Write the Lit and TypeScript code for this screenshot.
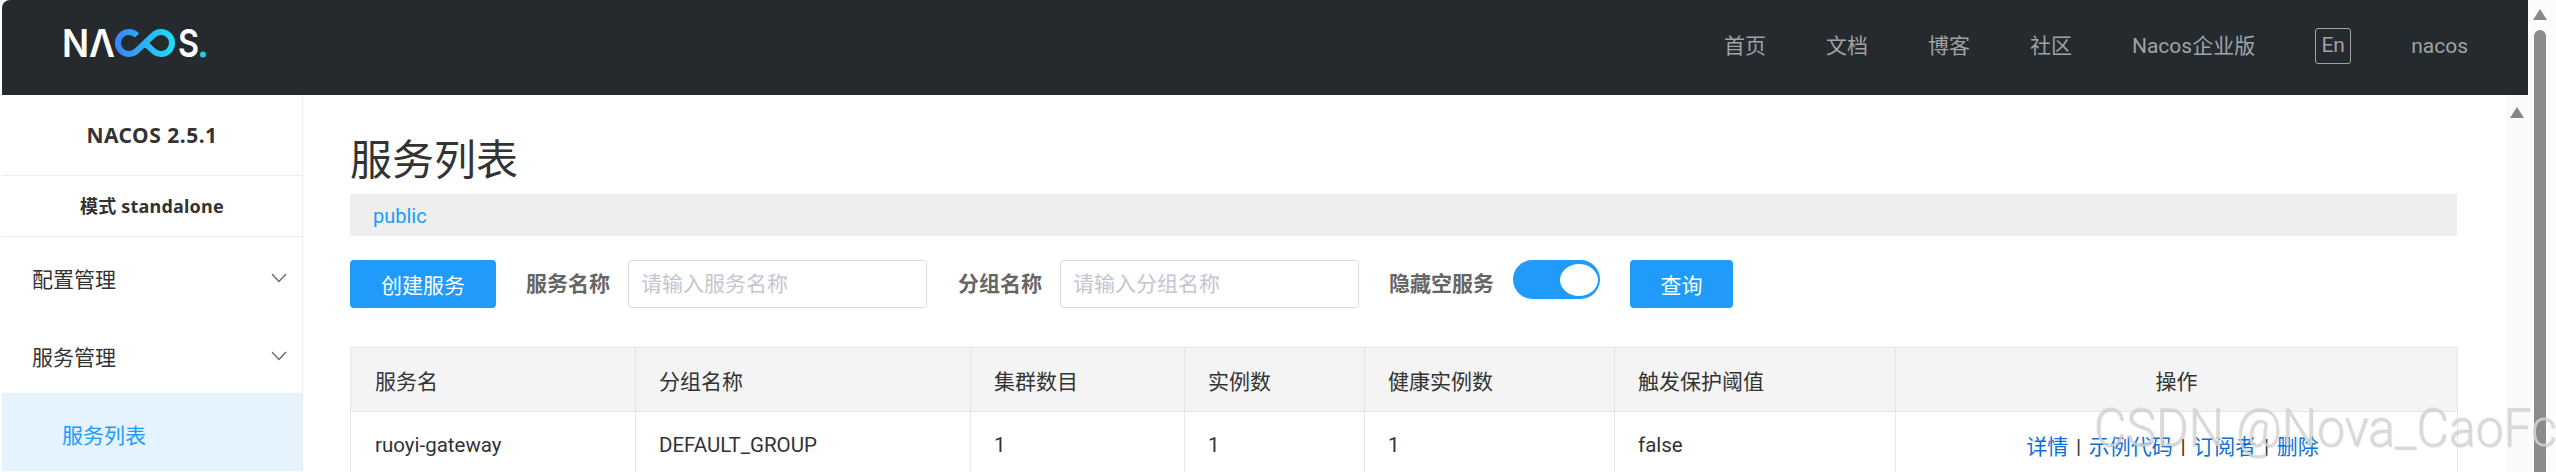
import { LitElement, html, css, svg } from "lit";
import { customElement } from "lit/decorators.js";

const headers = ["服务名", "分组名称", "集群数目", "实例数", "健康实例数", "触发保护阈值", "操作"];
const cells = ["ruoyi-gateway", "DEFAULT_GROUP", "1", "1", "1", "false"];
const widths = [285, 335, 214, 180, 250, 281, 562];
const navs = ["首页", "文档", "博客", "社区", "Nacos企业版"];

const chevron = svg`<svg class="chev" width="16" height="10" viewBox="0 0 16 10"><path d="M1 1l7 7.5L15 1" fill="none" stroke="#666" stroke-width="1.3"/></svg>`;

@customElement("app-root")
export class AppRoot extends LitElement {
  static styles = css`
    :host {
      display: flex;
      height: 472px;
      overflow: hidden;
      position: relative;
      background: #fff;
      padding-left: 2px;
      box-sizing: border-box;
      font-family: Roboto, "Noto Sans CJK SC", sans-serif;
      font-size: 21px;
      color: #333;
    }
    .main { flex: 1; min-width: 0; display: flex; flex-direction: column; }
    .outer-bar {
      width: 28px; flex: none; background: #fcfcfc;
      display: flex; flex-direction: column; align-items: center; padding-right: 4px; box-sizing: border-box;
    }
    .arrow {
      width: 0; height: 0; border-left: 7px solid transparent; border-right: 7px solid transparent;
      border-bottom: 11px solid #888; flex: none;
    }
    .outer-bar .arrow { margin-top: 9px; }
    .thumb { width: 12px; flex: 1; margin-top: 10px; background: #8b8b8b; border-radius: 6px 6px 0 0; }

    header {
      height: 95px; flex: none; background: #252a2f; border-top-left-radius: 8px;
      display: flex; align-items: center; padding: 0 60px; box-sizing: border-box;
    }
    .logo { display: block; margin-top: -9px; }
    .nav { margin-left: auto; display: flex; align-items: center; gap: 60px; color: #a0a2a4; line-height: 28px; margin-top: -3px; }
    .en { border: 1px solid #a0a2a4; border-radius: 3px; width: 36px; height: 36px; box-sizing: border-box; text-align: center; line-height: 32px; }

    .body { flex: 1; min-height: 0; display: flex; }
    aside { width: 300px; flex: none; border-right: 1px solid #eee; box-sizing: content-box; }
    .ver, .mode { font-family: "Noto Sans", "Noto Sans CJK SC", sans-serif; font-weight: 700; text-align: center; border-bottom: 1px solid #eee; box-sizing: border-box; }
    .ver { height: 81px; line-height: 80px; letter-spacing: 0.5px; }
    .mode { height: 61px; line-height: 61px; font-size: 18px; letter-spacing: 0.2px; }
    .item { height: 78px; display: flex; align-items: center; justify-content: space-between; padding: 4px 15px 0 30px; box-sizing: border-box; }
    .sub { height: 78px; background: #e4f3fe; color: #209bfa; display: flex; align-items: center; padding-left: 60px; padding-top: 3px; box-sizing: border-box; }

    .content { flex: 1; min-width: 0; padding: 0 49px 0 47px; }
    h1 { margin: 0; font-size: 42px; font-weight: 400; height: 99px; line-height: 42px; padding-top: 45px; box-sizing: border-box; }
    .crumb { height: 42px; background: #eee; color: #209bfa; font-size: 20px; line-height: 44px; padding-left: 23px; }

    .toolbar { display: flex; align-items: flex-start; margin-top: 24px; height: 87px; }
    .btn { height: 48px; background: #209bfa; color: #fff; border-radius: 4px; display: flex; align-items: center; justify-content: center; flex: none; }
    .btn.create { width: 146px; }
    .btn.query { width: 103px; margin-left: 30px; }
    .label { font-weight: 700; color: #666; line-height: 48px; flex: none; }
    .l1 { margin-left: 30px; margin-right: 18px; }
    .l2 { margin-left: 31px; margin-right: 18px; }
    .l3 { margin-left: 30px; margin-right: 19px; }
    .input { width: 299px; height: 48px; border: 1px solid #dcdee3; border-radius: 4px; box-sizing: border-box; color: #c4c6cf; line-height: 46px; padding-left: 12px; flex: none; }
    .switch { width: 87px; height: 39px; border-radius: 20px; background: #209bfa; position: relative; flex: none; }
    .knob { position: absolute; right: 2px; top: 4px; width: 38px; height: 32px; border-radius: 50%; background: #fff; }

    table { border-collapse: collapse; table-layout: fixed; width: 2107px; }
    th, td { border: 1px solid #e6e6e6; padding: 0 0 0 23px; text-align: left; font-weight: 400; box-sizing: border-box; }
    th:first-child, td:first-child { padding-left: 24px; }
    th { height: 64px; background: #f4f4f4; }
    td { height: 66px; font-size: 20.5px; }
    th:last-child, td:last-child { text-align: center; padding: 0; }
    .links { color: #0a6fd6; margin-left: -8px; font-size: 21px; }
    .links i { font-style: normal; margin: 0 2.5px; color: #333; }

    .inner-bar { width: 22px; flex: none; background: #fafafa; display: flex; flex-direction: column; align-items: center; }
    .inner-bar .arrow { margin-top: 12px; }

    .mark {
      position: absolute; right: 0; top: 398px; font-family: Roboto, sans-serif; font-weight: 300; font-size: 54px; line-height: 60px;
      color: rgba(216,216,216,.8); text-shadow: 1px 1px 1px rgba(140,140,140,.35); white-space: nowrap; pointer-events: none;
      transform: scaleX(0.923); transform-origin: right center;
    }
  `;

  logo() {
    return svg`<svg class="logo" width="146" height="52" viewBox="0 0 146 52">
      <defs><linearGradient id="g" x1="0" x2="1" y1="0" y2="0"><stop offset="0" stop-color="#3b86f8"/><stop offset="1" stop-color="#1cdcf8"/></linearGradient></defs>
      <text x="0" y="40" font-family="Inter, sans-serif" font-weight="600" font-size="38.5" fill="#fff" textLength="53" lengthAdjust="spacingAndGlyphs">NΛ</text>
      <path d="M75 7.5A11 11 0 1 0 75 22.5L91 7.5A11 11 0 1 1 91 22.5L83 15" transform="translate(0 11)" fill="none" stroke="url(#g)" stroke-width="6"/>
      <text x="116" y="40" font-family="Inter, sans-serif" font-weight="600" font-size="38.5" fill="#fff" textLength="21" lengthAdjust="spacingAndGlyphs">S</text>
      <circle cx="141" cy="37.5" r="3" fill="#1cd0e8"/>
    </svg>`;
  }

  render() {
    return html`
      <div class="main">
        <header>
          ${this.logo()}
          <div class="nav">
            ${navs.map((n) => html`<span>${n}</span>`)}
            <span class="en">En</span>
            <span>nacos</span>
          </div>
        </header>
        <div class="body">
          <aside>
            <div class="ver">NACOS 2.5.1</div>
            <div class="mode">模式 standalone</div>
            <div class="item"><span>配置管理</span>${chevron}</div>
            <div class="item"><span>服务管理</span>${chevron}</div>
            <div class="sub">服务列表</div>
          </aside>
          <div class="content">
            <h1>服务列表</h1>
            <div class="crumb">public</div>
            <div class="toolbar">
              <div class="btn create">创建服务</div>
              <span class="label l1">服务名称</span>
              <div class="input">请输入服务名称</div>
              <span class="label l2">分组名称</span>
              <div class="input">请输入分组名称</div>
              <span class="label l3">隐藏空服务</span>
              <div class="switch"><div class="knob"></div></div>
              <div class="btn query">查询</div>
            </div>
            <table>
              <colgroup>${widths.map((w) => html`<col style="width:${w}px" />`)}</colgroup>
              <thead><tr>${headers.map((h) => html`<th>${h}</th>`)}</tr></thead>
              <tbody>
                <tr>
                  ${cells.map((c) => html`<td>${c}</td>`)}
                  <td><span class="links">详情<i> | </i>示例代码<i> | </i>订阅者<i> | </i>删除</span></td>
                </tr>
              </tbody>
            </table>
          </div>
          <div class="inner-bar"><div class="arrow"></div></div>
        </div>
      </div>
      <div class="outer-bar"><div class="arrow"></div><div class="thumb"></div></div>
      <div class="mark">CSDN @Nova_CaoFc</div>
    `;
  }
}
